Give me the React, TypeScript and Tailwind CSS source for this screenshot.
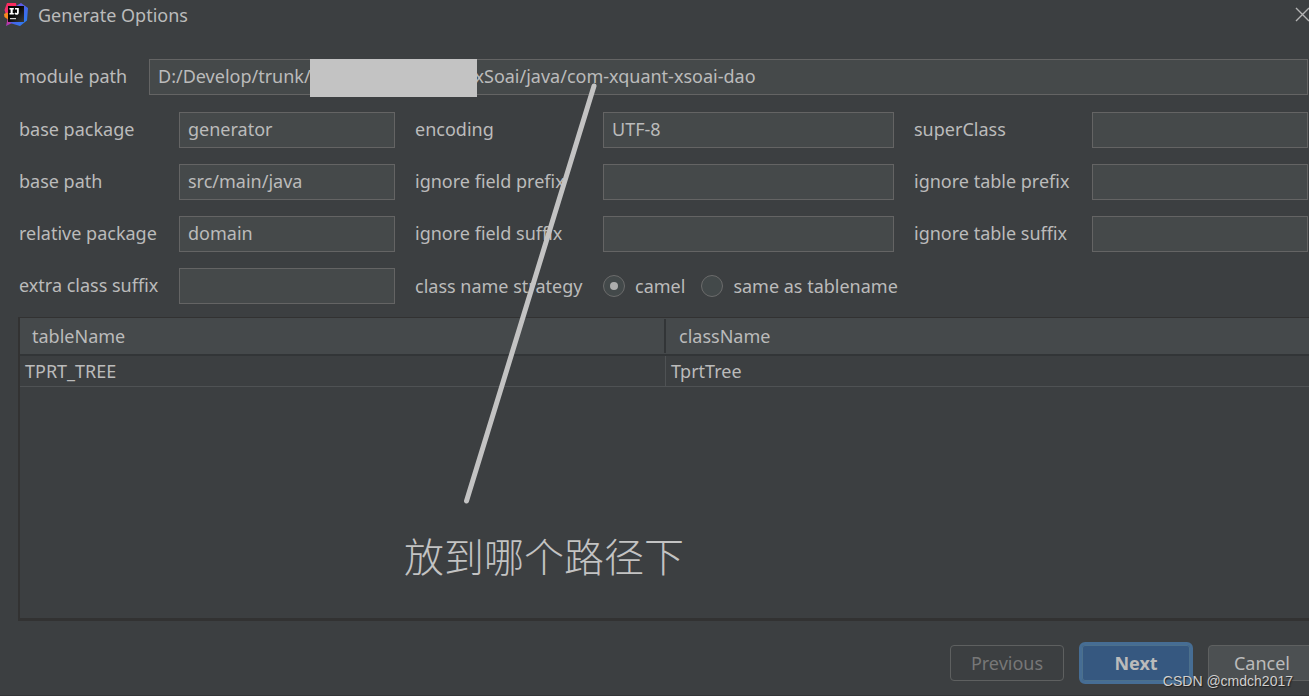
import { useState } from "react";

const fieldClass =
  "h-9 w-full min-w-0 border border-[#646464] bg-[#45494a] px-2 pb-0.5 text-[#bbbbbb] outline-none";

type Field = {
  id: string;
  label: string;
  value: string;
};

const fields: Field[] = [
  { id: "basePackage", label: "base package", value: "generator" },
  { id: "encoding", label: "encoding", value: "UTF-8" },
  { id: "superClass", label: "superClass", value: "" },
  { id: "basePath", label: "base path", value: "src/main/java" },
  { id: "ignoreFieldPrefix", label: "ignore field prefix", value: "" },
  { id: "ignoreTablePrefix", label: "ignore table prefix", value: "" },
  { id: "relativePackage", label: "relative package", value: "domain" },
  { id: "ignoreFieldSuffix", label: "ignore field suffix", value: "" },
  { id: "ignoreTableSuffix", label: "ignore table suffix", value: "" },
  { id: "extraClassSuffix", label: "extra class suffix", value: "" },
];

const tables = [{ tableName: "TPRT_TREE", className: "TprtTree" }];

const modulePath = "D:/Develop/trunk/" + " ".repeat(35) + "xSoai/java/com-xquant-xsoai-dao";

function IdeaLogo() {
  return (
    <svg className="size-6 shrink-0" viewBox="0 0 24 24" aria-hidden="true">
      <defs>
        <linearGradient id="ideaBlue" x1="0" y1="0" x2="1" y2="1">
          <stop offset="0" stopColor="#8a4bd8" />
          <stop offset="0.5" stopColor="#4a63e8" />
          <stop offset="1" stopColor="#1f86f5" />
        </linearGradient>
        <linearGradient id="ideaPink" x1="0" y1="0" x2="0" y2="1">
          <stop offset="0" stopColor="#fb2b5c" />
          <stop offset="0.6" stopColor="#e5337c" />
          <stop offset="1" stopColor="#a23bbd" />
        </linearGradient>
        <linearGradient id="ideaBlack" x1="0" y1="0" x2="1" y2="1">
          <stop offset="0.4" stopColor="#050505" />
          <stop offset="1" stopColor="#3a3a3a" />
        </linearGradient>
      </defs>
      <path d="M3 0 12 0 14 12 8 20 2 23 3.500 16 0.500 7Z" fill="url(#ideaPink)" />
      <path d="M0 11 3 9.500 5.500 12 4 16.500 0.500 14Z" fill="#f98a1d" />
      <path d="M12 3 17 0 24 5 23 17.500 16 23 6 20 12 12Z" fill="url(#ideaBlue)" />
      <path d="M4 3h16v16H4Z" fill="url(#ideaBlack)" />
      <path
        d="M5.500 5h4.300v1.600H8.700v3.300h1.100v1.600H5.500V9.900h1.100V6.600H5.500ZM11 5h3.800v4.400c0 1.500-.9 2.300-2.300 2.300-.9 0-1.600-.3-2.100-.9l.9-1.200c.3.300.6.500 1 .5.500 0 .7-.3.700-.9V6.600h-2Z"
        fill="#fff"
      />
      <path d="M6 15h6v1.200H6Z" fill="#d0d0d0" />
    </svg>
  );
}

function TitleBar() {
  return (
    <header className="flex h-7 items-center justify-between pt-px pl-1">
      <div className="flex items-center gap-[10px]">
        <IdeaLogo />
        <h1>Generate Options</h1>
      </div>
      <button type="button" aria-label="Close" className="-mr-px">
        <svg className="size-[15px]" viewBox="0 0 15 15" fill="none" stroke="#b4b4b4" strokeWidth="1.4">
          <path d="M1 1 14 14M14 1 1 14" />
        </svg>
      </button>
    </header>
  );
}

function Strategy() {
  const [strategy, setStrategy] = useState("camel");

  return (
    <>
      <span id="strategyLabel">class name strategy</span>
      <div role="radiogroup" aria-labelledby="strategyLabel" className="col-span-3 flex items-center gap-4">
        {["camel", "same as tablename"].map((option) => (
          <label key={option} className="flex items-center gap-[10px]">
            <input
              type="radio"
              name="strategy"
              value={option}
              checked={strategy === option}
              onChange={() => setStrategy(option)}
              className="grid size-[22px] appearance-none place-content-center rounded-full border border-[#6b6b6b] bg-[#43494a] before:size-2 before:rounded-full checked:before:bg-[#adadad]"
            />
            {option}
          </label>
        ))}
      </div>
    </>
  );
}

function TableList() {
  return (
    <div className="-mr-[3px] ml-[18px] min-h-[304px] flex-1 border-t border-b-3 border-l-2 border-[#323232]">
      <table className="w-full table-fixed border-separate border-spacing-0 text-left">
        <thead>
          <tr className="h-[38px] bg-[#45494b]">
            <th className="border-b-2 border-[#323537] p-0 font-normal">
              <div className="my-px border-r-2 border-[#323537] pl-3 leading-[34px]">tableName</div>
            </th>
            <th className="border-b-2 border-[#323537] p-0 pl-[13px] font-normal">className</th>
          </tr>
        </thead>
        <tbody>
          {tables.map((row) => (
            <tr key={row.tableName} className="h-[31px]">
              <td className="border-r border-b border-[#4f5254] p-0 pl-[5px]">{row.tableName}</td>
              <td className="border-b border-[#4f5254] p-0 pl-[5px]">{row.className}</td>
            </tr>
          ))}
        </tbody>
      </table>
    </div>
  );
}

export default function App() {
  return (
    <div className="relative flex min-h-screen flex-col overflow-hidden border-b border-[#333537] bg-[#3c3f41] font-['Noto_Sans','Noto_Sans_CJK_SC',sans-serif] text-[18px] leading-6 text-[#bbbbbb]">
      <TitleBar />

      <form className="flex flex-1 flex-col pt-[31px]" onSubmit={(e) => e.preventDefault()}>
        <div className="mb-[17px] flex items-center gap-5 pr-px pl-[19px]">
          <label htmlFor="modulePath" className="w-[110px] shrink-0 pb-0.5">
            module path
          </label>
          <div className="relative flex-1">
            <input id="modulePath" className={fieldClass} defaultValue={modulePath} />
            <div className="absolute top-0 left-[161px] h-[38px] w-[167px] bg-[#c3c3c3]" />
          </div>
        </div>

        <div className="mb-[13px] grid grid-cols-[140px_216fr_168px_291fr_158px_216fr] items-center gap-x-5 gap-y-4 pr-px pl-[19px] whitespace-nowrap">
          {fields.map((field) => (
            <div key={field.id} className="contents">
              <label htmlFor={field.id} className="pb-0.5">
                {field.label}
              </label>
              <input id={field.id} className={fieldClass} defaultValue={field.value} />
            </div>
          ))}
          <Strategy />
        </div>

        <TableList />

        <footer className="-mr-[7px] flex items-center justify-end gap-[15px] pt-[21px] pb-[11px]">
          <button type="button" disabled className="h-9 w-[114px] rounded border border-[#5e6060] text-[#777777]">
            Previous
          </button>
          <button
            type="submit"
            className="h-[42px] w-[114px] rounded-md border-3 border-[#466d94] bg-[#365880] font-bold shadow-[inset_0_0_0_1px_#4c708c]"
          >
            Next
          </button>
          <button type="button" className="h-9 w-[108px] rounded border border-[#5e6060] bg-[#4c5052]">
            Cancel
          </button>
        </footer>
      </form>

      {/* Annotation drawn over the dialog */}
      <svg className="pointer-events-none absolute top-0 left-0 h-[510px] w-[620px]" viewBox="0 0 620 510">
        <path d="M594 86 466.500 501" stroke="#c3c3c3" strokeWidth="5" strokeLinecap="round" />
      </svg>
      <p className="pointer-events-none absolute top-[531px] left-[404px] font-['Noto_Sans_CJK_SC',sans-serif] text-[40px] leading-[48px] font-light text-[#c3c3c3]">
        放到哪个路径下
      </p>
      <span className="pointer-events-none absolute right-4 bottom-1 font-['Liberation_Sans',sans-serif] text-[14px] leading-5 text-[#d0d0d0] [text-shadow:1px_1px_1px_#222]">
        CSDN @cmdch2017
      </span>
    </div>
  );
}
